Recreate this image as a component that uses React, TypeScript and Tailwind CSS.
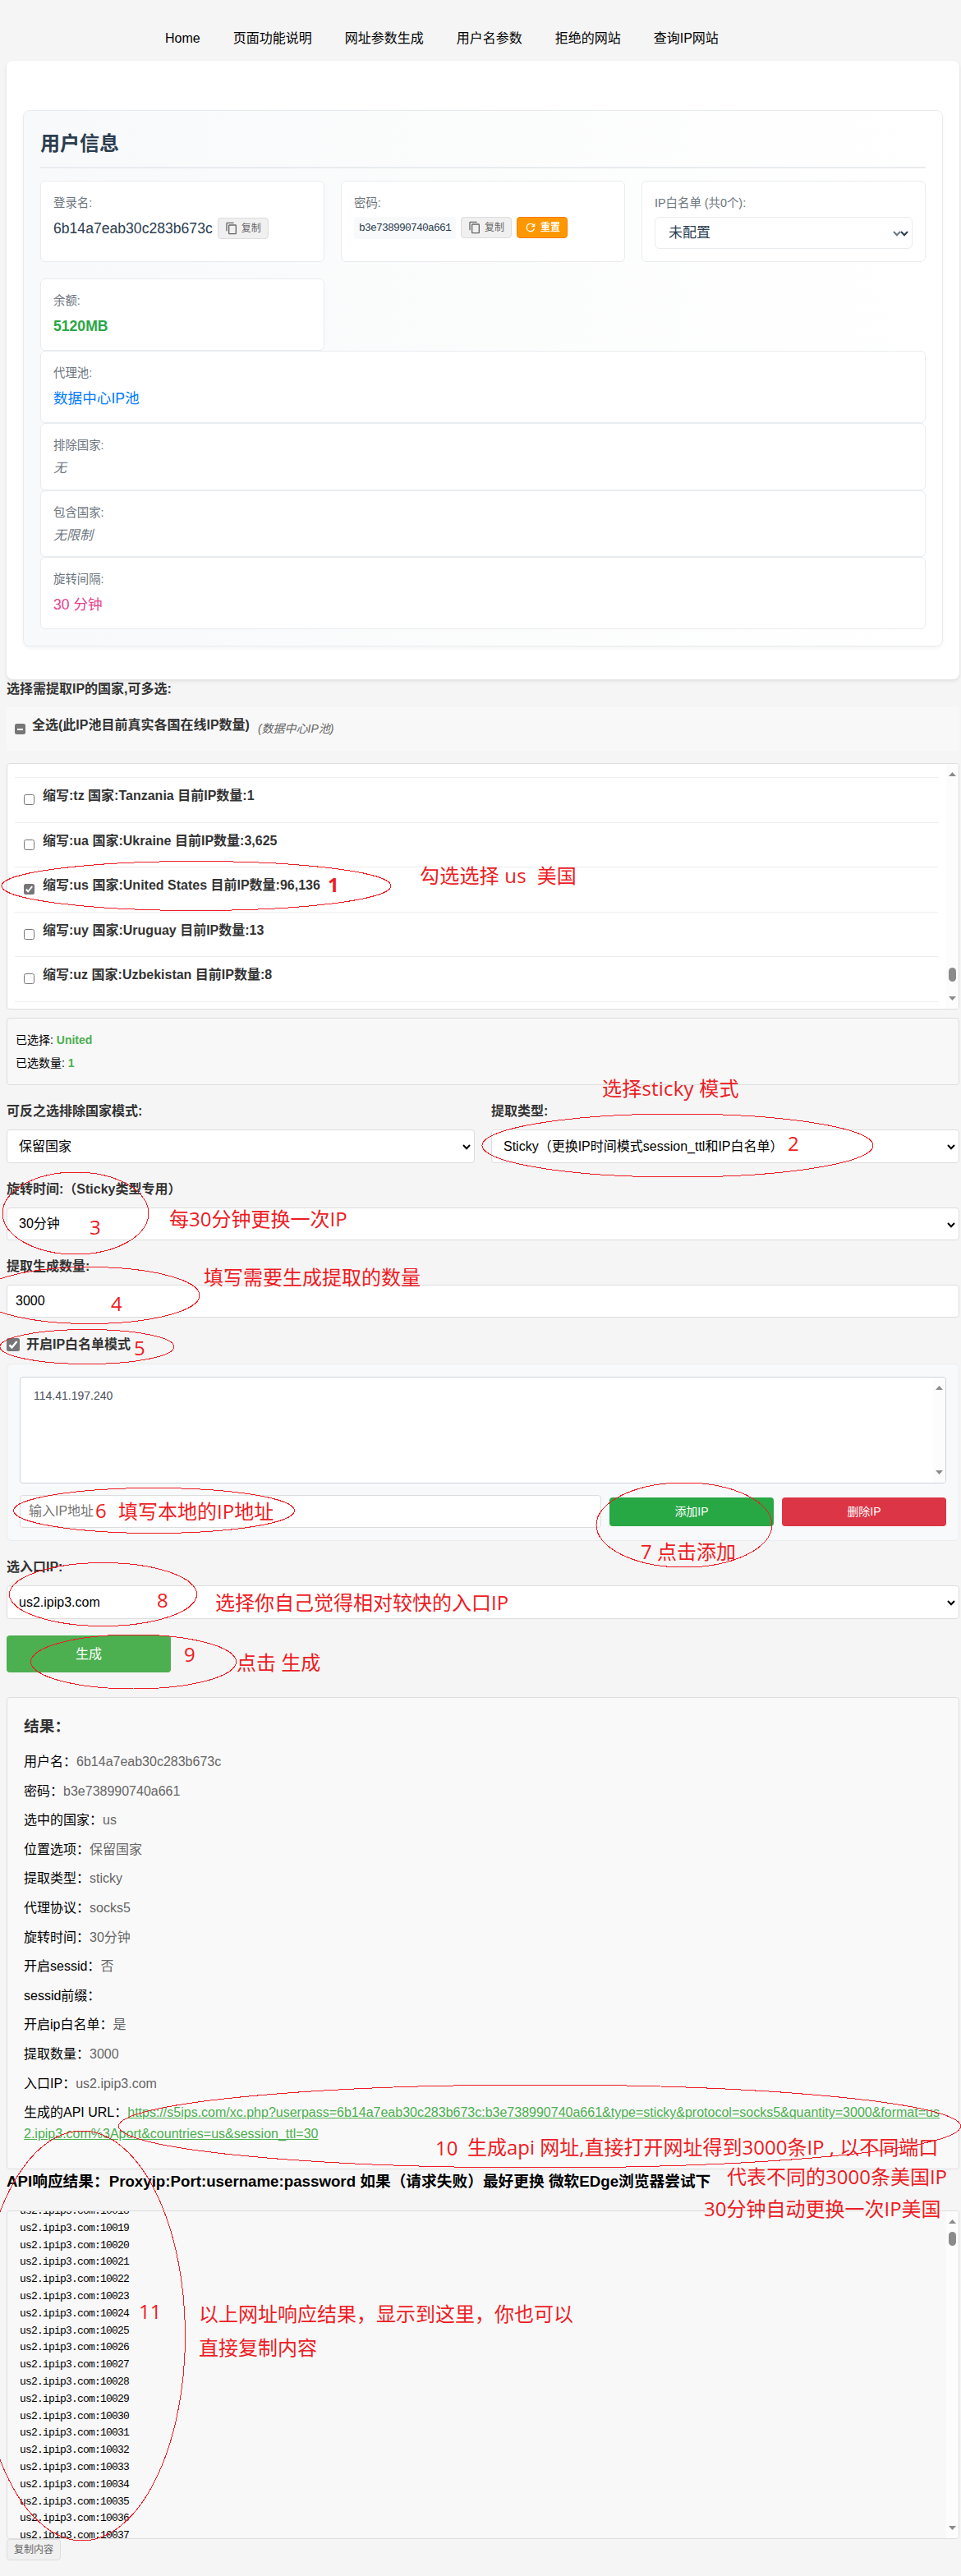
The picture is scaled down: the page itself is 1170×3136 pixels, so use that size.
import { ReactNode } from 'react'
import clsx from 'clsx'

const navItems = ['Home', '页面功能说明', '网址参数生成', '用户名参数', '拒绝的网站', '查询IP网站']

const countries = [
  { code: 'tz', name: 'Tanzania', count: '1', checked: false },
  { code: 'ua', name: 'Ukraine', count: '3,625', checked: false },
  { code: 'us', name: 'United States', count: '96,136', checked: true },
  { code: 'uy', name: 'Uruguay', count: '13', checked: false },
  { code: 'uz', name: 'Uzbekistan', count: '8', checked: false },
]

const results = [
  ['用户名', '6b14a7eab30c283b673c'],
  ['密码', 'b3e738990740a661'],
  ['选中的国家', 'us'],
  ['位置选项', '保留国家'],
  ['提取类型', 'sticky'],
  ['代理协议', 'socks5'],
  ['旋转时间', '30分钟'],
  ['开启sessid', '否'],
  ['sessid前缀', ''],
  ['开启ip白名单', '是'],
  ['提取数量', '3000'],
  ['入口IP', 'us2.ipip3.com'],
]

const ports = Array.from({ length: 20 }, (_, i) => 10018 + i)

const apiUrl =
  'https://s5ips.com/xc.php?userpass=6b14a7eab30c283b673c:b3e738990740a661&type=sticky&protocol=socks5&quantity=3000&format=us2.ipip3.com%3Aport&countries=us&session_ttl=30'

const notes = [
  { text: '勾选选择 us  美国', pos: 'left-[511px] top-[1052px] tracking-[0.2px]' },
  { text: '1', pos: 'left-[399px] top-[1063px] font-bold' },
  { text: '选择sticky 模式', pos: 'left-[733px] top-[1311px] tracking-[0.2px]' },
  { text: '2', pos: 'left-[959px] top-[1378px]' },
  { text: '3', pos: 'left-[109px] top-[1480px]' },
  { text: '每30分钟更换一次IP', pos: 'left-[206px] top-[1470px]' },
  { text: '4', pos: 'left-[135px] top-[1573px]' },
  { text: '填写需要生成提取的数量', pos: 'left-[248px] top-[1541px]' },
  { text: '5', pos: 'left-[163px] top-[1627px]' },
  { text: '6', pos: 'left-[116px] top-[1825px]' },
  { text: '填写本地的IP地址', pos: 'left-[144px] top-[1826px]' },
  { text: '7 点击添加', pos: 'left-[780px] top-[1875px]' },
  { text: '8', pos: 'left-[191px] top-[1934px]' },
  { text: '选择你自己觉得相对较快的入口IP', pos: 'left-[262px] top-[1937px]' },
  { text: '9', pos: 'left-[224px] top-[2000px]' },
  { text: '点击 生成', pos: 'left-[288px] top-[2010px]' },
  { text: '10', pos: 'left-[530px] top-[2601px]' },
  { text: '生成api 网址,直接打开网址得到3000条IP , 以不同端口', pos: 'left-[569px] top-[2600px]' },
  { text: '代表不同的3000条美国IP', pos: 'left-[885px] top-[2636px]' },
  { text: '30分钟自动更换一次IP美国', pos: 'left-[857px] top-[2675px]' },
  { text: '11', pos: 'left-[169px] top-[2800px]' },
  { text: '以上网址响应结果，显示到这里，你也可以', pos: 'left-[242px] top-[2803px]' },
  { text: '直接复制内容', pos: 'left-[242px] top-[2844px]' },
]

// cx, cy, rx, ry
const circles = [
  [239, 1078.5, 237, 30],
  [825, 1394.5, 238, 38.5],
  [92, 1477, 89, 50],
  [109, 1577, 134, 34.5],
  [106, 1639.5, 106, 21],
  [187.5, 1839, 171, 27.5],
  [833, 1856.5, 107, 51.5],
  [125.5, 1941, 114, 38.5],
  [162.5, 2023, 125, 33],
  [657, 2588.5, 512.5, 50.5],
  [100, 2843.5, 125.5, 249.5],
]

function Chevron({ className }: { className?: string }) {
  return (
    <svg viewBox="0 0 10 7" className={clsx('absolute h-[7px] w-[10px]', className)} fill="none" stroke="currentColor" strokeWidth="2">
      <path d="M1 1 L5 5.3 L9 1" />
    </svg>
  )
}

function CopyIcon() {
  return (
    <svg viewBox="0 0 24 24" className="h-[16px] w-[16px]" fill="currentColor">
      <path d="M16 1H4c-1.1 0-2 .9-2 2v14h2V3h12V1zm3 4H8c-1.1 0-2 .9-2 2v14c0 1.1.9 2 2 2h11c1.1 0 2-.9 2-2V7c0-1.1-.9-2-2-2zm0 16H8V7h11v14z" />
    </svg>
  )
}

function RefreshIcon() {
  return (
    <svg viewBox="0 0 24 24" className="h-[16px] w-[16px]" fill="currentColor">
      <path d="M17.65 6.35A7.96 7.96 0 0 0 12 4a8 8 0 1 0 7.73 10h-2.08A6 6 0 1 1 12 6c1.66 0 3.14.69 4.22 1.78L13 11h7V4l-2.35 2.35z" />
    </svg>
  )
}

function CopyButton() {
  return (
    <button className="flex h-[26px] w-[62px] items-center justify-center gap-1 rounded border border-[#ddd] bg-[#f0f0f0] text-xs text-[#666]">
      <CopyIcon />
      复制
    </button>
  )
}

function Check({ state, className }: { state: 'on' | 'off' | 'mixed'; className?: string }) {
  return (
    <span
      className={clsx(
        'flex shrink-0 items-center justify-center rounded-[2.5px]',
        state === 'off' ? 'border border-[#767676] bg-white' : 'bg-[#767676]',
        className,
      )}
    >
      {state === 'on' && (
        <svg viewBox="0 0 13 13" className="h-full w-full" fill="none" stroke="#fff" strokeWidth="2">
          <path d="M2.8 6.8 L5.2 9.3 L10.2 3.2" />
        </svg>
      )}
      {state === 'mixed' && <span className="h-[2px] w-[7px] bg-white" />}
    </span>
  )
}

function Arrow({ down }: { down?: boolean }) {
  return (
    <svg viewBox="0 0 9 5" className="h-[5px] w-[9px]" fill="#8b8b8b">
      <path d={down ? 'M0 0H9L4.5 5Z' : 'M0 5H9L4.5 0Z'} />
    </svg>
  )
}

function Cell({ label, className, children }: { label: string; className?: string; children: ReactNode }) {
  return (
    <div className={clsx('rounded-md border border-[#e9ecef] bg-white px-[15px] pt-[15px]', className)}>
      <div className="text-[14.4px] leading-[23px] text-[#6c757d]">{label}</div>
      {children}
    </div>
  )
}

function Label({ children }: { children: ReactNode }) {
  return <label className="mb-[10px] block h-6 font-bold leading-6 text-[#333]">{children}</label>
}

function Select({ value, className }: { value: string; className?: string }) {
  return (
    <div className={clsx('relative flex items-center rounded border border-[#ddd] bg-white pl-[14px] text-base text-black', className)}>
      {value}
      <Chevron className="right-1 top-[17px]" />
    </div>
  )
}

export default function App() {
  return (
    <div className="relative h-[3136px] w-[1170px] overflow-hidden bg-[#f5f5f5] pl-2 pr-[2px] font-['Liberation_Sans','Noto_Sans_CJK_SC',sans-serif] text-base text-black">
      <nav className="flex h-[74px] gap-10 pl-[193px] pt-[35px] leading-6">
        {navItems.map((item) => (
          <a key={item}>{item}</a>
        ))}
      </nav>

      <div className="h-[753px] rounded-lg bg-white px-5 pt-[60px] shadow-[0_2px_4px_rgba(0,0,0,0.1)]">
        <section className="h-[653px] rounded-lg border border-[#e9ecef] bg-linear-to-r from-[#f8f9fa] to-white px-5 pt-[19px] shadow-[0_2px_4px_rgba(0,0,0,0.05)]">
          <h2 className="mb-[15px] h-[51px] border-b-2 border-[#e9ecef] text-2xl font-bold leading-[41px] text-[#2c3e50]">用户信息</h2>

          <div className="mb-5 grid h-[99px] grid-cols-3 gap-5">
            <Cell label="登录名:">
              <div className="mt-[5px] flex items-center gap-[6px]">
                <span className="text-[17.6px] leading-[28px] text-[#2c3e50]">6b14a7eab30c283b673c</span>
                <CopyButton />
              </div>
            </Cell>
            <Cell label="密码:">
              <div className="mt-[5px] flex items-start gap-[6px]">
                <code className="flex h-[27px] w-[124px] items-center rounded-[3px] bg-[#f8f9fa] pl-[6px] font-['Liberation_Mono',monospace] text-[13px] tracking-[-0.8px] text-[#2c3e50]">
                  b3e738990740a661
                </code>
                <CopyButton />
                <button className="flex h-[26px] w-[62px] items-center justify-center gap-1 rounded border border-[#f57c00] bg-[#ff9800] text-xs font-bold text-white">
                  <RefreshIcon />
                  重置
                </button>
              </div>
            </Cell>
            <Cell label="IP白名单 (共0个):">
              <div className="relative mt-[5px] flex h-[39px] items-center rounded-md border border-[#e9ecef] pl-4 text-[17px] text-[#2c3e50]">
                未配置
                <Chevron className="right-[13px] top-4 opacity-70" />
                <Chevron className="right-1 top-4" />
              </div>
            </Cell>
          </div>

          <Cell label="余额:" className="h-[88px] w-[346px]">
            <div className="mt-[5px] text-[17.6px] font-bold leading-[28px] text-[#28a745]">5120MB</div>
          </Cell>
          <Cell label="代理池:" className="h-[88px]">
            <div className="mt-[5px] text-[17.6px] leading-[28px] text-[#007bff]">数据中心IP池</div>
          </Cell>
          <Cell label="排除国家:" className="h-[82px]">
            <div className="mt-[3px] text-base italic leading-[26px] text-[#6c757d]">无</div>
          </Cell>
          <Cell label="包含国家:" className="h-[81px]">
            <div className="mt-[3px] text-base italic leading-[26px] text-[#6c757d]">无限制</div>
          </Cell>
          <Cell label="旋转间隔:" className="h-[88px]">
            <div className="mt-[5px] text-[17.6px] leading-[28px] text-[#e83e8c]">30 分钟</div>
          </Cell>
        </section>
      </div>

      <Label>选择需提取IP的国家,可多选:</Label>
      <div className="mb-[15px] flex h-[53px] rounded bg-[#f8f8f8] pl-[10px]">
        <Check state="mixed" className="mt-5 h-[13px] w-[13px]" />
        <span className="ml-2 mt-[10px] font-bold leading-6 text-[#333]">全选(此IP池目前真实各国在线IP数量)</span>
        <span className="ml-[10px] mt-[14px] text-[14px] italic leading-6 text-[#666]">(数据中心IP池)</span>
      </div>

      <div className="mb-[10px] flex h-[300px] overflow-hidden rounded border border-[#ddd] bg-white">
        <div className="ml-[9px] flex-1 pr-[10px] pt-4">
          {countries.map((c) => (
            <div key={c.code} className="flex h-[54.6px] border-t border-[#eee] pl-[11px]">
              <Check state={c.checked ? 'on' : 'off'} className="mt-5 h-[13px] w-[13px]" />
              <span className="ml-[10px] mt-[10px] font-bold leading-6 text-[#333]">
                缩写:{c.code} 国家:{c.name} 目前IP数量:{c.count}
              </span>
            </div>
          ))}
          <div className="border-t border-[#eee]" />
        </div>
        <div className="flex w-[15px] flex-col items-center bg-[#fcfcfc] pb-[10px] pt-[10px]">
          <Arrow />
          <div className="mt-auto h-[17px] w-[9px] rounded-full bg-[#8b8b8b]" />
          <div className="mt-[18px]">
            <Arrow down />
          </div>
        </div>
      </div>

      <div className="mb-5 h-[82px] rounded border border-[#ddd] bg-[#f8f8f8] pl-[10px] pt-[12px] text-[14px] leading-[28px]">
        <div>
          已选择: <span className="font-bold text-[#4caf50]">United</span>
        </div>
        <div>
          已选数量: <span className="font-bold text-[#4caf50]">1</span>
        </div>
      </div>

      <div className="mb-5 flex gap-5">
        <div className="w-[570px]">
          <Label>可反之选排除国家模式:</Label>
          <Select value="保留国家" className="h-[41px]" />
        </div>
        <div className="w-[570px]">
          <Label>提取类型:</Label>
          <Select value="Sticky（更换IP时间模式session_ttl和IP白名单）" className="h-[41px]" />
        </div>
      </div>

      <Label>旋转时间:（Sticky类型专用）</Label>
      <Select value="30分钟" className="mb-5 h-10" />

      <Label>提取生成数量:</Label>
      <div className="mb-[21px] flex h-10 items-center rounded border border-[#ddd] bg-white pl-[10px]">3000</div>

      <div className="mb-[11px] flex h-6 items-center gap-2">
        <Check state="on" className="h-4 w-4" />
        <span className="font-bold leading-6 text-[#333]">开启IP白名单模式</span>
      </div>

      <div className="mb-5 h-[216px] rounded-md border border-[#e9ecef] bg-[#f8f9fa] px-[15px] pt-[15px]">
        <div className="mb-[14px] flex h-[130px] justify-between overflow-hidden rounded border border-[#ced4da] bg-white">
          <span className="ml-4 mt-[10px] text-[14px] leading-6 text-[#495057]">114.41.197.240</span>
          <div className="flex w-[15px] flex-col items-center justify-between bg-[#fcfcfc] py-[10px]">
            <Arrow />
            <Arrow down />
          </div>
        </div>
        <div className="flex items-center gap-[10px]">
          <div className="flex h-10 w-[708px] items-center rounded border border-[#ddd] bg-white pl-[10px] text-[#757575]">输入IP地址</div>
          <button className="h-[35px] w-[200px] rounded bg-[#28a745] text-[14px] text-white">添加IP</button>
          <button className="h-[35px] w-[200px] rounded bg-[#dc3545] text-[14px] text-white">删除IP</button>
        </div>
      </div>

      <Label>选入口IP:</Label>
      <Select value="us2.ipip3.com" className="mb-5 h-[41px]" />

      <button className="mb-[30px] block h-[45px] w-[200px] rounded bg-[#4caf50] text-base text-white">生成</button>

      <section className="h-[575px] rounded border border-[#ddd] bg-[#f9f9f9] px-5 pt-[20px]">
        <h3 className="mb-[15px] text-[18.72px] font-bold leading-[30px] text-[#333]">结果：</h3>
        {results.map(([label, value]) => (
          <p key={label} className="mb-[10px] leading-[25.6px]">
            {label}：<span className="text-[#666]">{value}</span>
          </p>
        ))}
        <p className="break-all leading-[25.6px]">
          生成的API URL：<a className="text-[#4caf50] underline">{apiUrl}</a>
        </p>
      </section>

      <h3 className="mb-[21px] text-[18.72px] font-bold leading-[29px]">
        API响应结果：Proxyip:Port:username:password 如果（请求失败）最好更换 微软EDge浏览器尝试下
      </h3>

      <div className="flex h-[400px] justify-between overflow-hidden rounded border border-[#ddd] bg-[#f8f8f8]">
        <div className="-mt-[10px] pl-[15px] font-['Liberation_Mono',monospace] text-[13px] leading-[20.8px] tracking-[-0.8px]">
          {ports.map((p) => (
            <div key={p}>us2.ipip3.com:{p}</div>
          ))}
        </div>
        <div className="flex w-[15px] flex-col items-center bg-[#fcfcfc] py-[10px]">
          <Arrow />
          <div className="mt-[10px] h-[17px] w-[9px] rounded-full bg-[#8b8b8b]" />
          <div className="mt-auto">
            <Arrow down />
          </div>
        </div>
      </div>
      <button className="block h-[26px] w-[66px] rounded border border-[#ddd] bg-[#f0f0f0] text-xs text-[#666]">复制内容</button>

      {/* Tutorial marks drawn over the form */}
      <svg viewBox="0 0 1170 3136" className="absolute left-0 top-0 h-[3136px] w-[1170px]" fill="none" stroke="#ed1c24" strokeWidth="1" shapeRendering="crispEdges">
        {circles.map(([cx, cy, rx, ry]) => (
          <ellipse key={cy} cx={cx} cy={cy} rx={rx} ry={ry} />
        ))}
      </svg>
      {notes.map((n) => (
        <span key={n.text} className={clsx("absolute whitespace-pre font-['Open_Sans','Noto_Sans_CJK_SC',sans-serif] text-2xl leading-7 text-[#ed1c24]", n.pos)}>
          {n.text}
        </span>
      ))}
    </div>
  )
}
